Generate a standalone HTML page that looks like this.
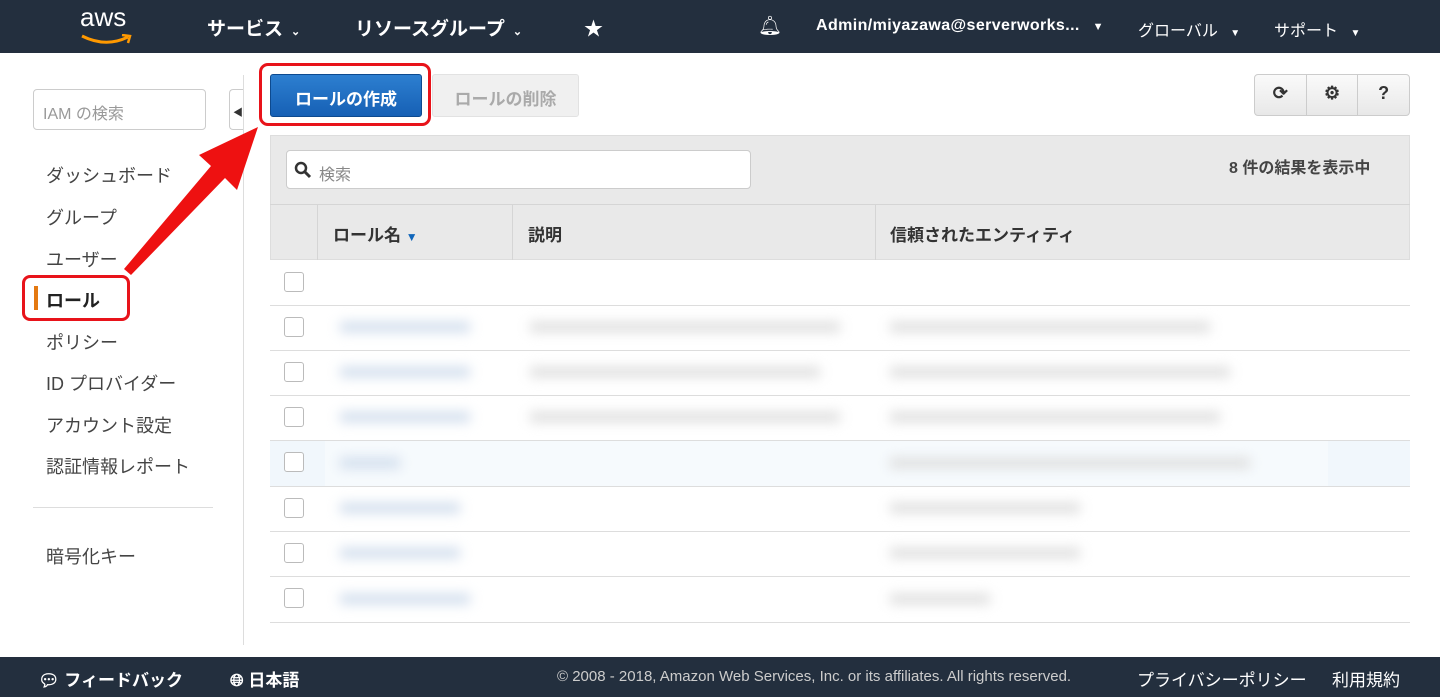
<!DOCTYPE html>
<html><head><meta charset="utf-8"><style>
*{margin:0;padding:0;box-sizing:border-box}
body{width:1440px;height:697px;position:relative;overflow:hidden;background:#fff;font-family:"Liberation Sans","Noto Sans CJK JP",sans-serif;color:#444}
.a{position:absolute}
.hd{left:0;top:0;width:1440px;height:53px;background:#232f3e;color:#fff;font-weight:bold}
.hd span{position:absolute;top:14px;font-size:19px}
.hd small{font-size:11px;margin-left:8px}
.nav{left:46px;font-size:18px;color:#444}
.ft{left:0;top:657px;width:1440px;height:40px;background:#232f3e;color:#fff}
.ft span{position:absolute;top:9px;font-size:17px;font-weight:bold}
.cb{left:284px;width:20px;height:20px;border:1px solid #bbb;border-radius:3px;background:#fff}
.ln{left:270px;width:1140px;height:1px;background:#ddd}
.bl{background:#cfdcec;filter:blur(6px);height:10px}
.bg{background:#ddd;filter:blur(6px);height:10px}
</style></head><body>
<div class="a hd">
<span style="left:80px;top:2px;font-size:26px;font-weight:normal">aws</span>
<svg class="a" style="left:80px;top:34px" width="52" height="12"><path d="M2 2 Q26 14 48 3" stroke="#f90" stroke-width="3" fill="none"/><path d="M42 1 L50 2 L48 9" stroke="#f90" stroke-width="2.5" fill="none"/></svg>
<span style="left:207px">サービス<small>⌄</small></span>
<span style="left:355px">リソースグループ<small>⌄</small></span>
<span style="left:584px">★</span>
<span style="left:758px;font-weight:normal">🔔︎</span>
<span style="left:816px;font-size:16px;top:17px;letter-spacing:.4px">Admin/miyazawa@serverworks... <small style="font-size:11px">▼</small></span>
<span style="left:1138px;font-size:16px;top:17px;font-weight:normal">グローバル <small style="font-size:10px">▼</small></span>
<span style="left:1274px;font-size:16px;top:17px;font-weight:normal">サポート <small style="font-size:10px">▼</small></span>
</div>
<div class="a" style="left:33px;top:89px;width:173px;height:41px;border:1px solid #ccc;border-radius:4px;color:#999;font-size:16px;padding:10px 9px">IAM の検索</div>
<div class="a" style="left:229px;top:89px;width:15px;height:41px;border:1px solid #ccc;border-right:none;border-radius:4px 0 0 4px;font-size:10px;padding:14px 3px;color:#333">◀</div>
<div class="a" style="left:243px;top:75px;width:1px;height:570px;background:#ddd"></div>
<div class="a nav" style="top:162px">ダッシュボード</div>
<div class="a nav" style="top:204px">グループ</div>
<div class="a nav" style="top:246px">ユーザー</div>
<div class="a" style="left:22px;top:275px;width:108px;height:46px;border:3px solid #e8131a;border-radius:8px"></div>
<div class="a" style="left:34px;top:286px;width:4px;height:24px;background:#e47911"></div>
<div class="a nav" style="top:287px;color:#222;font-weight:bold">ロール</div>
<div class="a nav" style="top:329px">ポリシー</div>
<div class="a nav" style="top:370px">ID プロバイダー</div>
<div class="a nav" style="top:412px">アカウント設定</div>
<div class="a nav" style="top:453px">認証情報レポート</div>
<div class="a" style="left:33px;top:507px;width:180px;height:1px;background:#ddd"></div>
<div class="a nav" style="top:543px">暗号化キー</div>
<div class="a" style="left:259px;top:63px;width:172px;height:63px;border:3px solid #e8131a;border-radius:9px"></div>
<div class="a" style="left:270px;top:74px;width:152px;height:43px;background:linear-gradient(#2d7fd0,#1660b5);border:1px solid #0d4a8f;border-radius:3px;color:#fff;font-weight:bold;font-size:17px;padding:10px 0;text-align:center">ロールの作成</div>
<div class="a" style="left:432px;top:74px;width:147px;height:43px;background:#f0f0f0;border:1px solid #e2e2e2;border-radius:3px;color:#aaa;font-weight:bold;font-size:17px;padding:10px 0;text-align:center">ロールの削除</div>
<div class="a" style="left:1254px;top:74px;width:156px;height:42px;border:1px solid #ccc;border-radius:4px;background:linear-gradient(#fafafa,#e8e8e8);display:flex;font-size:18px;font-weight:bold;color:#333">
<div style="flex:1;text-align:center;padding-top:8px;border-right:1px solid #ccc">⟳</div><div style="flex:1;text-align:center;padding-top:8px;border-right:1px solid #ccc">⚙</div><div style="flex:1;text-align:center;padding-top:8px">?</div></div>
<div class="a" style="left:270px;top:135px;width:1140px;height:125px;background:#e9e9e9;border:1px solid #ddd"></div>
<div class="a" style="left:286px;top:150px;width:465px;height:39px;background:#fff;border:1px solid #ccc;border-radius:4px;font-size:16px;color:#888;padding:10px 8px 10px 32px">検索</div>
<svg class="a" style="left:294px;top:161px" width="18" height="18"><circle cx="7" cy="7" r="5" stroke="#333" stroke-width="2.5" fill="none"/><path d="M11 11 L16 16" stroke="#333" stroke-width="3"/></svg>
<div class="a" style="left:1229px;top:154px;font-size:16px;font-weight:bold;color:#444">8 件の結果を表示中</div>
<div class="a" style="left:270px;top:204px;width:1140px;height:1px;background:#d5d5d5"></div>
<div class="a" style="left:317px;top:205px;width:1px;height:55px;background:#d5d5d5"></div>
<div class="a" style="left:512px;top:205px;width:1px;height:55px;background:#d5d5d5"></div>
<div class="a" style="left:875px;top:205px;width:1px;height:55px;background:#d5d5d5"></div>
<div class="a" style="left:333px;top:221px;font-size:17px;font-weight:bold;color:#333">ロール名 <span style="color:#1166bb;font-size:12px">▼</span></div>
<div class="a" style="left:528px;top:221px;font-size:17px;font-weight:bold;color:#333">説明</div>
<div class="a" style="left:890px;top:221px;font-size:17px;font-weight:bold;color:#333">信頼されたエンティティ</div>
<div class="a" style="left:270px;top:441px;width:1140px;height:45px;background:#f1f7fc"></div>
<div class="a" style="left:325px;top:268px;width:1003px;height:345px;background:rgba(255,255,255,.4)"></div>
<div class="a ln" style="top:305px"></div><div class="a ln" style="top:350px"></div><div class="a ln" style="top:395px"></div><div class="a ln" style="top:440px"></div><div class="a ln" style="top:486px"></div><div class="a ln" style="top:531px"></div><div class="a ln" style="top:576px"></div><div class="a ln" style="top:622px"></div>
<div class="a cb" style="top:272px"></div><div class="a cb" style="top:317px"></div><div class="a cb" style="top:362px"></div><div class="a cb" style="top:407px"></div><div class="a cb" style="top:452px"></div><div class="a cb" style="top:498px"></div><div class="a cb" style="top:543px"></div><div class="a cb" style="top:588px"></div>
<div class="a bl" style="left:340px;top:322px;width:130px"></div><div class="a bl" style="left:340px;top:367px;width:130px"></div><div class="a bl" style="left:340px;top:412px;width:130px"></div><div class="a bl" style="left:340px;top:458px;width:60px"></div><div class="a bl" style="left:340px;top:503px;width:120px"></div><div class="a bl" style="left:340px;top:548px;width:120px"></div><div class="a bl" style="left:340px;top:594px;width:130px"></div>
<div class="a bg" style="left:530px;top:322px;width:310px"></div><div class="a bg" style="left:530px;top:367px;width:290px"></div><div class="a bg" style="left:530px;top:412px;width:310px"></div>
<div class="a bg" style="left:890px;top:322px;width:320px"></div><div class="a bg" style="left:890px;top:367px;width:340px"></div><div class="a bg" style="left:890px;top:412px;width:330px"></div><div class="a bg" style="left:890px;top:458px;width:360px"></div><div class="a bg" style="left:890px;top:503px;width:190px"></div><div class="a bg" style="left:890px;top:548px;width:190px"></div><div class="a bg" style="left:890px;top:594px;width:100px"></div>
<svg class="a" style="left:0;top:0" width="300" height="300"><polygon points="131,275 225,178 237,190 258,127 199,155 211,166 124,269" fill="#ee1111"/></svg>
<div class="a ft">
<span style="left:38px">💬︎ フィードバック</span>
<span style="left:230px">🌐︎ 日本語</span>
<span style="left:557px;font-size:15px;font-weight:normal;top:11px;color:#ccc">© 2008 - 2018, Amazon Web Services, Inc. or its affiliates. All rights reserved.</span>
<span style="left:1137px;font-weight:normal">プライバシーポリシー</span>
<span style="left:1332px;font-weight:normal">利用規約</span>
</div>
</body></html>
